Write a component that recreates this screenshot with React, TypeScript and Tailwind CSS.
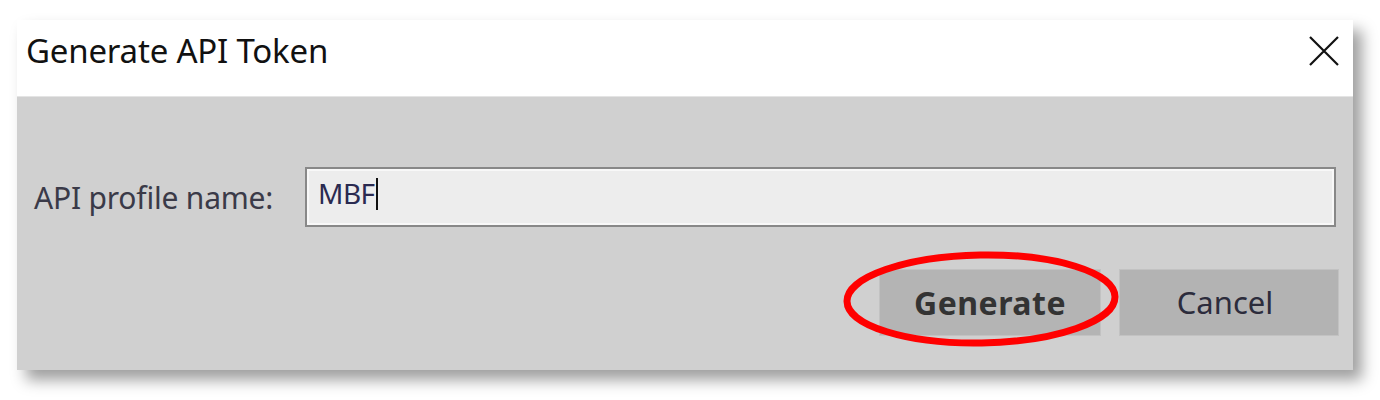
import React from "react";

export default function App() {
  return (
    <div className="w-[1380px] h-[400px] bg-white pt-[20px] pl-[17px]" style={{ fontFamily: '"Noto Sans", "Open Sans", sans-serif' }}>
      <div className="w-[1336px] h-[350px] flex flex-col shadow-[9px_10px_14px_rgba(0,0,0,0.38)]">
        {/* Title bar */}
        <div className="h-[77px] bg-white flex items-center justify-between pl-[9px] pr-[12px] pb-[14px] border-b border-[#e4e4e4]">
          <span className="text-[33px] text-[#111] tracking-[-0.2px]">Generate API Token</span>
          <svg width="32" height="32" viewBox="0 0 32 32" className="mr-[1px]">
            <path d="M2 2 L30 30 M30 2 L2 30" stroke="#111" strokeWidth="2.2" />
          </svg>
        </div>

        {/* Body */}
        <div className="flex-1 bg-[#d0d0d0] pt-[70px] px-[17px]">
          <div className="flex items-center">
            <label className="w-[271px] text-[30px] text-[#3a3a48] tracking-[-0.2px]">API profile name:</label>
            <div className="flex-1 h-[60px] border-2 border-[#888] bg-[#ededed] shadow-[inset_0_0_0_2px_#f8f8f8] flex items-center pl-[11px]">
              <span className="text-[28px] text-[#2a2a50] leading-none -mt-[8px] tracking-[-0.5px]">MBF</span>
              <span className="w-[2px] h-[32px] bg-[#111] ml-[1px] -mt-[6px]" />
            </div>
          </div>

          <div className="flex justify-end gap-[18px] mt-[42px] mr-[-3px]">
            <div className="relative">
              <button className="w-[222px] h-[67px] bg-[#b4b4b4] text-[32px] font-bold text-[#333] border border-[#c2c2c2] tracking-[0.5px]">
                Generate
              </button>
              <svg
                className="absolute left-[-37px] top-[-18px] pointer-events-none"
                width="280"
                height="100"
                viewBox="0 0 280 100"
              >
                <ellipse cx="139" cy="48" rx="134" ry="44" fill="none" stroke="#ff0000" strokeWidth="7" transform="rotate(-1 139 48)" />
              </svg>
            </div>
            <button className="w-[220px] h-[67px] bg-[#b3b3b3] text-[31px] text-[#2c2c3c] border border-[#c2c2c2] pr-[8px]">
              Cancel
            </button>
          </div>
        </div>
      </div>
    </div>
  );
}
